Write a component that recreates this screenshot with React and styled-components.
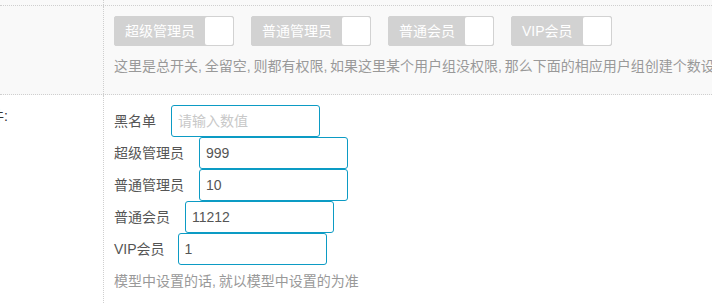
import React from "react";
import styled, { createGlobalStyle } from "styled-components";

const Global = createGlobalStyle`
  html, body {
    margin: 0;
    padding: 0;
    background: #ffffff;
    overflow: hidden;
  }
  body {
    font-family: "Liberation Sans", "Noto Sans CJK SC", sans-serif;
    font-size: 14px;
    color: #666;
  }
`;

const Table = styled.div`
  width: 712px;
  height: 304px;
  overflow: hidden;
`;

const Row = styled.div`
  display: grid;
  grid-template-columns: 104px 1fr;
  background: ${(p) => (p.$gray ? "#f9f9f9" : "#ffffff")};
  border-bottom: ${(p) => (p.$last ? "none" : "1px dotted #cfcfcf")};
  ${(p) => (p.$height ? `height: ${p.$height}px;` : "")}
  ${(p) => (p.$last ? "min-height: 210px;" : "")}
`;

const LabelCell = styled.div`
  box-sizing: border-box;
  border-right: 1px dotted #cfcfcf;
  display: flex;
  justify-content: flex-end;
  align-items: flex-start;
  overflow: hidden;
  white-space: nowrap;
  padding: ${(p) => (p.$pad ? "11px 95px 0 0" : "0")};
  line-height: 20px;
  color: #333;
`;

const ContentCell = styled.div`
  box-sizing: border-box;
  padding: ${(p) => p.$pad || "0 0 0 10px"};
  min-width: 0;
  white-space: nowrap;
`;

const SwitchRow = styled.div`
  display: flex;
  gap: 17px;
`;

const Switch = styled.div`
  display: inline-flex;
  align-items: stretch;
  box-sizing: border-box;
  height: 30px;
  border: 1px solid #d2d2d2;
  border-radius: 2px;
  background: #d2d2d2;
`;

const SwitchText = styled.span`
  padding: 0 10px;
  line-height: 28px;
  color: #ffffff;
  font-size: 14px;
`;

const Knob = styled.span`
  width: 28px;
  background: #ffffff;
  border-radius: 2px;
`;

const Hint = styled.div`
  margin-top: ${(p) => p.$mt || 0}px;
  line-height: 20px;
  color: #999;
  white-space: nowrap;
`;

const InputRow = styled.div`
  display: flex;
  align-items: center;
  height: 32px;
`;

const FieldLabel = styled.span`
  color: #555;
  margin-right: ${(p) => p.$gap || 15}px;
  line-height: 20px;
`;

const Input = styled.input`
  box-sizing: border-box;
  width: 149px;
  height: 32px;
  border: 1px solid #0c9bc4;
  border-radius: 3px;
  padding: 0 6px;
  font-family: "Liberation Sans", "Noto Sans CJK SC", sans-serif;
  font-size: 14px;
  color: #555;
  background: #ffffff;
  outline: none;
  &::placeholder {
    color: #c8c8c8;
  }
`;

const switches = ["超级管理员", "普通管理员", "普通会员", "VIP会员"];

const fields = [
  { label: "黑名单", value: "", placeholder: "请输入数值" },
  { label: "超级管理员", value: "999" },
  { label: "普通管理员", value: "10" },
  { label: "普通会员", value: "11212" },
  { label: "VIP会员", value: "1", gap: 13 },
];

const sp = (t) => t.split(",").join(",\u2009");

export default function App() {
  return (
    <>
      <Global />
      <Table>
        <Row $gray $height={5}>
          <LabelCell />
          <ContentCell />
        </Row>
        <Row $gray>
          <LabelCell />
          <ContentCell $pad="10px 0 18px 10px">
            <SwitchRow>
              {switches.map((s) => (
                <Switch key={s}>
                  <SwitchText>{s}</SwitchText>
                  <Knob />
                </Switch>
              ))}
            </SwitchRow>
            <Hint $mt={10}>
              {sp(
                "这里是总开关,全留空,则都有权限,如果这里某个用户组没权限,那么下面的相应用户组创建个数设置无效"
              )}
            </Hint>
          </ContentCell>
        </Row>
        <Row $last>
          <LabelCell $pad>
            <span>创建个数限制条件:</span>
          </LabelCell>
          <ContentCell $pad="10px 0 0 10px">
            {fields.map((f) => (
              <InputRow key={f.label}>
                <FieldLabel $gap={f.gap}>{f.label}</FieldLabel>
                <Input
                  type="text"
                  defaultValue={f.value}
                  placeholder={f.placeholder || ""}
                />
              </InputRow>
            ))}
            <Hint $mt={6}>{sp("模型中设置的话,就以模型中设置的为准")}</Hint>
          </ContentCell>
        </Row>
      </Table>
    </>
  );
}
